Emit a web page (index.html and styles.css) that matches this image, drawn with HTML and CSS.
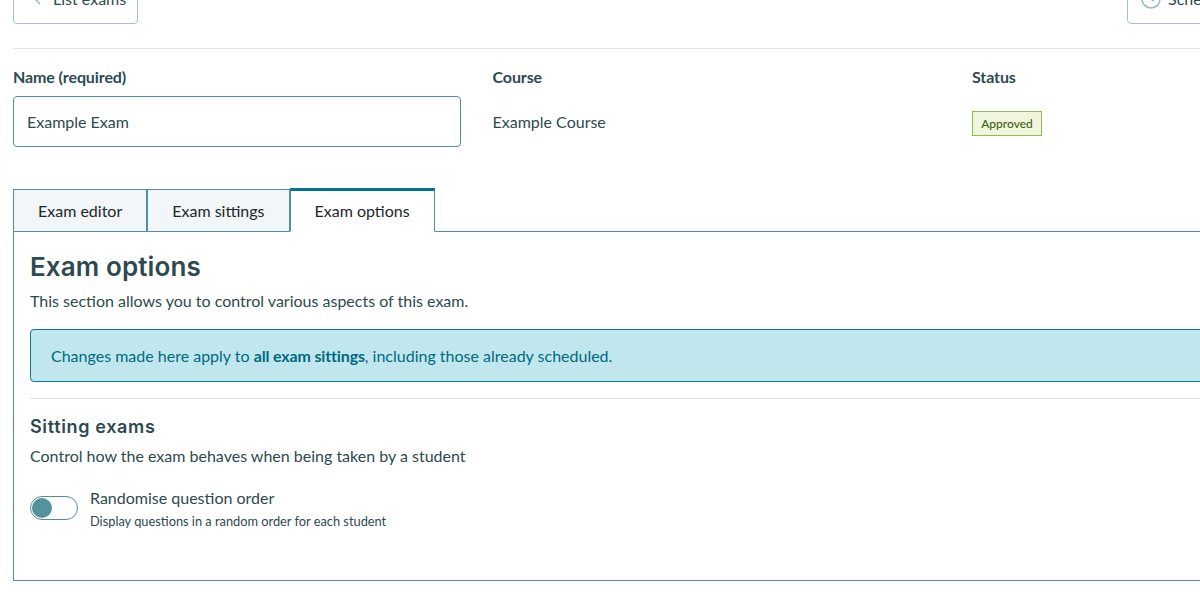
FILE: index.html
```html
<!DOCTYPE html>
<html lang="en">
<head>
<meta charset="utf-8">
<title>Exam options</title>
<link rel="stylesheet" href="styles.css">
</head>
<body>
<div class="page">
  <div class="toolbar">
    <a class="btn btn-back">
      <svg class="btn-icon" viewBox="0 0 16 16" width="16" height="16"><path d="M10 3 L5 8 L10 13" fill="none" stroke="#9fb9bf" stroke-width="1.6"/></svg>
      <span>List exams</span>
    </a>
    <a class="btn btn-schedule">
      <svg class="btn-icon" viewBox="0 0 20 20" width="20" height="20"><circle cx="10" cy="10" r="9" fill="none" stroke="#9fb9bf" stroke-width="1.6"/><path d="M10 5 V10 L13 12" fill="none" stroke="#9fb9bf" stroke-width="1.6"/></svg>
      <span>Schedule exam</span>
    </a>
  </div>
  <hr class="rule">
  <div class="meta">
    <div class="field">
      <label class="label">Name (required)</label>
      <div class="input">Example Exam</div>
    </div>
    <div class="field">
      <div class="label">Course</div>
      <div class="value">Example Course</div>
    </div>
    <div class="field">
      <div class="label">Status</div>
      <div class="value"><span class="badge">Approved</span></div>
    </div>
  </div>
  <div class="tabs">
    <div class="tab">Exam editor</div>
    <div class="tab">Exam sittings</div>
    <div class="tab active">Exam options</div>
  </div>
  <section class="panel">
    <h2 class="title">Exam options</h2>
    <p class="text">This section allows you to control various aspects of this exam.</p>
    <div class="notice">Changes made here apply to <strong>all exam sittings</strong>, including those already scheduled.</div>
    <hr class="rule inner">
    <h3 class="subtitle">Sitting exams</h3>
    <p class="text">Control how the exam behaves when being taken by a student</p>
    <div class="option">
      <span class="toggle"><span class="knob"></span></span>
      <div class="option-text">
        <div class="option-name">Randomise question order</div>
        <div class="option-help">Display questions in a random order for each student</div>
      </div>
    </div>
  </section>
</div>
</body>
</html>
```
FILE: styles.css
```css
html, body {
  margin: 0;
  height: 600px;
  overflow: hidden;
  background: #fff;
}
body {
  font-family: Lato, "Liberation Sans", sans-serif;
  color: #2c4a50;
  font-size: 16px;
}
.page {
  width: 1406px;
  margin-top: -24px;
  padding: 0 13px;
}
.toolbar {
  display: flex;
  justify-content: space-between;
}
.btn {
  box-sizing: border-box;
  display: flex;
  align-items: center;
  gap: 7px;
  height: 48px;
  padding: 0 10px 3px 16px;
  border: 1px solid #a6c1c7;
  border-radius: 4px;
  font-size: 16px;
}
.btn-back {
  width: 125px;
}
.btn-schedule {
  width: 180px;
  margin-right: 112px;
  padding-left: 13px;
}
.btn-icon {
  flex: none;
}
.rule {
  border: 0;
  border-top: 1px solid #e1e4e6;
  margin: 24px 0 0;
}
.meta {
  display: grid;
  grid-template-columns: repeat(3, 447.5px);
  column-gap: 32px;
  margin-top: 18px;
}
.label {
  display: block;
  font-weight: 700;
  font-size: 16px;
  line-height: 20px;
  letter-spacing: -0.1px;
}
.input {
  box-sizing: border-box;
  height: 51px;
  margin-top: 9px;
  padding: 0 13px;
  display: flex;
  align-items: center;
  border: 1px solid #4f919b;
  border-radius: 4px;
  line-height: 20px;
}
.value {
  height: 51px;
  margin-top: 9px;
  display: flex;
  align-items: center;
}
.badge {
  box-sizing: border-box;
  height: 25px;
  width: 70px;
  display: flex;
  align-items: center;
  justify-content: center;
  margin-top: 3px;
  background: #eff6dd;
  border: 1px solid #8fbf45;
  color: #3f5f14;
  font-size: 12px;
  font-weight: 500;
}
.tabs {
  display: flex;
  align-items: flex-end;
  margin-top: 41px;
  position: relative;
  z-index: 1;
  margin-bottom: -1px;
}
.tab {
  box-sizing: border-box;
  height: 43px;
  padding: 0 24px;
  display: flex;
  align-items: center;
  background: #f2f6f9;
  border: 1px solid #4f919b;
  color: #1b2729;
}
.tab.active {
  height: 44px;
  padding-bottom: 2px;
  background: #fff;
  border-top: 3px solid #00758d;
  border-bottom-color: #fff;
}
.panel {
  box-sizing: border-box;
  height: 350px;
  padding: 18px 16px 0;
  border: 1px solid #4f919b;
}
.title {
  margin: 0;
  font-family: Inter, "Noto Sans", sans-serif;
  font-size: 26px;
  font-weight: 600;
  line-height: 34px;
  letter-spacing: 0.12px;
}
.text {
  margin: 5px 0 0;
  line-height: 24px;
}
.notice {
  box-sizing: border-box;
  height: 53px;
  margin-top: 16px;
  padding: 0 20px;
  display: flex;
  align-items: center;
  white-space: pre;
  background: #c1e7ee;
  border: 1px solid #0c7a92;
  border-radius: 4px;
  color: #00697f;
}
.notice strong {
  font-weight: 700;
  letter-spacing: -0.15px;
}
.rule.inner {
  margin: 16px 0 0;
}
.subtitle {
  margin: 15px 0 0;
  font-family: Inter, "Noto Sans", sans-serif;
  font-size: 18px;
  font-weight: 600;
  line-height: 25px;
  letter-spacing: 0.65px;
}
.subtitle + .text {
  margin-top: 5px;
}
.option {
  display: flex;
  gap: 12px;
  margin-top: 19px;
}
.toggle {
  box-sizing: border-box;
  flex: none;
  width: 48px;
  height: 24px;
  margin-top: 9px;
  padding: 1px;
  border: 1px solid #4f919b;
  border-radius: 12px;
  background: #fff;
}
.knob {
  display: block;
  width: 20px;
  height: 20px;
  border-radius: 50%;
  background: #54929c;
}
.option-name {
  line-height: 22px;
}
.option-help {
  margin-top: 2px;
  font-size: 12.8px;
  line-height: 20px;
}
```
